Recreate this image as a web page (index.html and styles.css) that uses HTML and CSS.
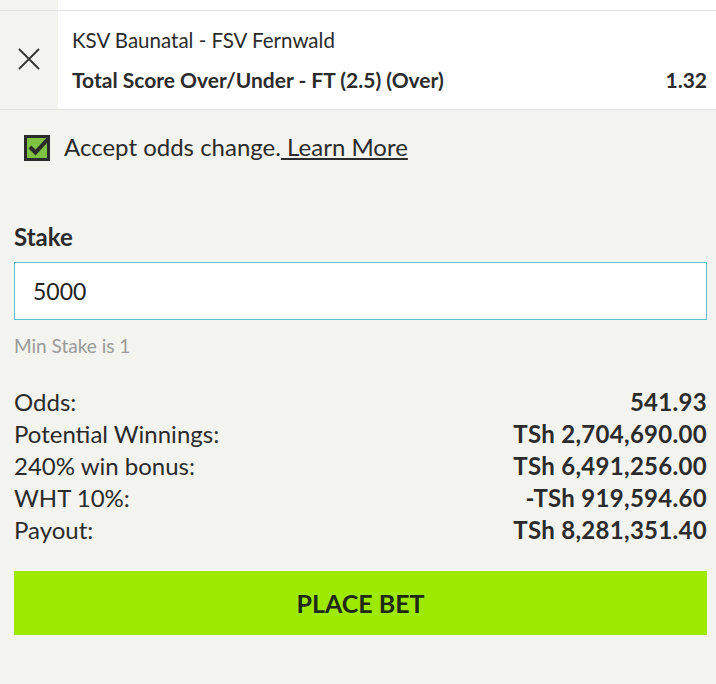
FILE: index.html
```html
<!DOCTYPE html>
<html lang="en">
<head>
    <meta charset="UTF-8">
    <meta name="viewport" content="width=device-width, initial-scale=1.0">
    <title>Betslip</title>
    <link rel="stylesheet" href="styles.css">
</head>
<body>

<div class="slip-top">
    <div class="side"></div>
    <div class="main"></div>
</div>

<div class="bet-row">
    <div class="side">
        <svg class="remove" width="24" height="24" viewBox="0 0 24 24">
            <path d="M2 2 L22 22 M22 2 L2 22" stroke="#333" stroke-width="1.8" fill="none"/>
        </svg>
    </div>
    <div class="main">
        <div class="match">KSV Baunatal - FSV Fernwald</div>
        <div class="market">
            <span>Total Score Over/Under - FT (2.5) (Over)</span>
            <span>1.32</span>
        </div>
    </div>
</div>

<div class="accept">
    <svg class="check" width="30" height="30" viewBox="0 0 30 30">
        <rect x="2.5" y="5.5" width="23" height="23" fill="#7ec242" stroke="#2b2b2b" stroke-width="3"/>
        <path d="M7 16 L12.5 21.5 L25 8" stroke="#2b2b2b" stroke-width="4" fill="none"/>
    </svg>
    <span>Accept odds change.<a href="#" class="learn"> Learn More</a></span>
</div>

<div class="stake">
    <div class="stake-label">Stake</div>
    <input type="text" class="stake-input" value="5000">
    <div class="min-stake">Min Stake is 1</div>
</div>

<div class="summary">
    <div class="line"><span>Odds:</span><strong>541.93</strong></div>
    <div class="line"><span>Potential Winnings:</span><strong>TSh 2,704,690.00</strong></div>
    <div class="line"><span>240% win bonus:</span><strong>TSh 6,491,256.00</strong></div>
    <div class="line"><span>WHT 10%:</span><strong>-TSh 919,594.60</strong></div>
    <div class="line"><span>Payout:</span><strong>TSh 8,281,351.40</strong></div>
</div>

<a href="#" class="place-bet">PLACE BET</a>

</body>
</html>
```

FILE: styles.css
```css
body {
    font-family: Lato, "Open Sans", sans-serif;
    margin: 0;
    background-color: #f3f3ef;
    color: #2b2b2b;
}
.slip-top, .bet-row {
    display: flex;
    border-bottom: 1px solid #e2e2de;
}
.slip-top {
    height: 10px;
}
.side {
    width: 58px;
    flex-shrink: 0;
    display: flex;
    align-items: center;
    justify-content: center;
}
.main {
    flex: 1;
    background: white;
}
.bet-row .main {
    padding: 16px 9px 16px 14px;
}
.bet-row .side {
    padding-bottom: 2px;
}
.match {
    font-size: 20.5px;
    line-height: 26px;
}
.market {
    display: flex;
    justify-content: space-between;
    font-weight: bold;
    font-size: 21px;
    line-height: 26px;
    margin-top: 14px;
}
.accept {
    display: flex;
    align-items: center;
    gap: 11px;
    padding: 20px 0 0 23px;
    font-size: 24px;
    height: 32px;
}
.learn {
    color: #2b2b2b;
    text-decoration: underline;
}
.stake {
    padding: 0 9px 0 14px;
    margin-top: 60px;
}
.stake-label {
    font-weight: bold;
    font-size: 24px;
    line-height: 30px;
}
.stake-input {
    display: block;
    box-sizing: border-box;
    width: 100%;
    height: 58px;
    margin-top: 10px;
    padding: 0 18px;
    border: 1px solid #5cc2c9;
    background: white;
    font-family: Lato, sans-serif;
    font-size: 23px;
    color: #222;
    outline: none;
}
.min-stake {
    color: #9a9a9a;
    font-size: 19px;
    margin-top: 14px;
    line-height: 24px;
}
.summary {
    padding: 0 9px 0 14px;
    margin-top: 28px;
    font-size: 24px;
}
.line {
    display: flex;
    justify-content: space-between;
    line-height: 32px;
}
.line strong {
    letter-spacing: 0.3px;
}
.place-bet {
    display: block;
    margin: 25px 9px 0 14px;
    height: 64px;
    line-height: 64px;
    background-color: #9ee900;
    color: #1f2a14;
    text-align: center;
    text-decoration: none;
    font-weight: bold;
    font-size: 25px;
}
```
